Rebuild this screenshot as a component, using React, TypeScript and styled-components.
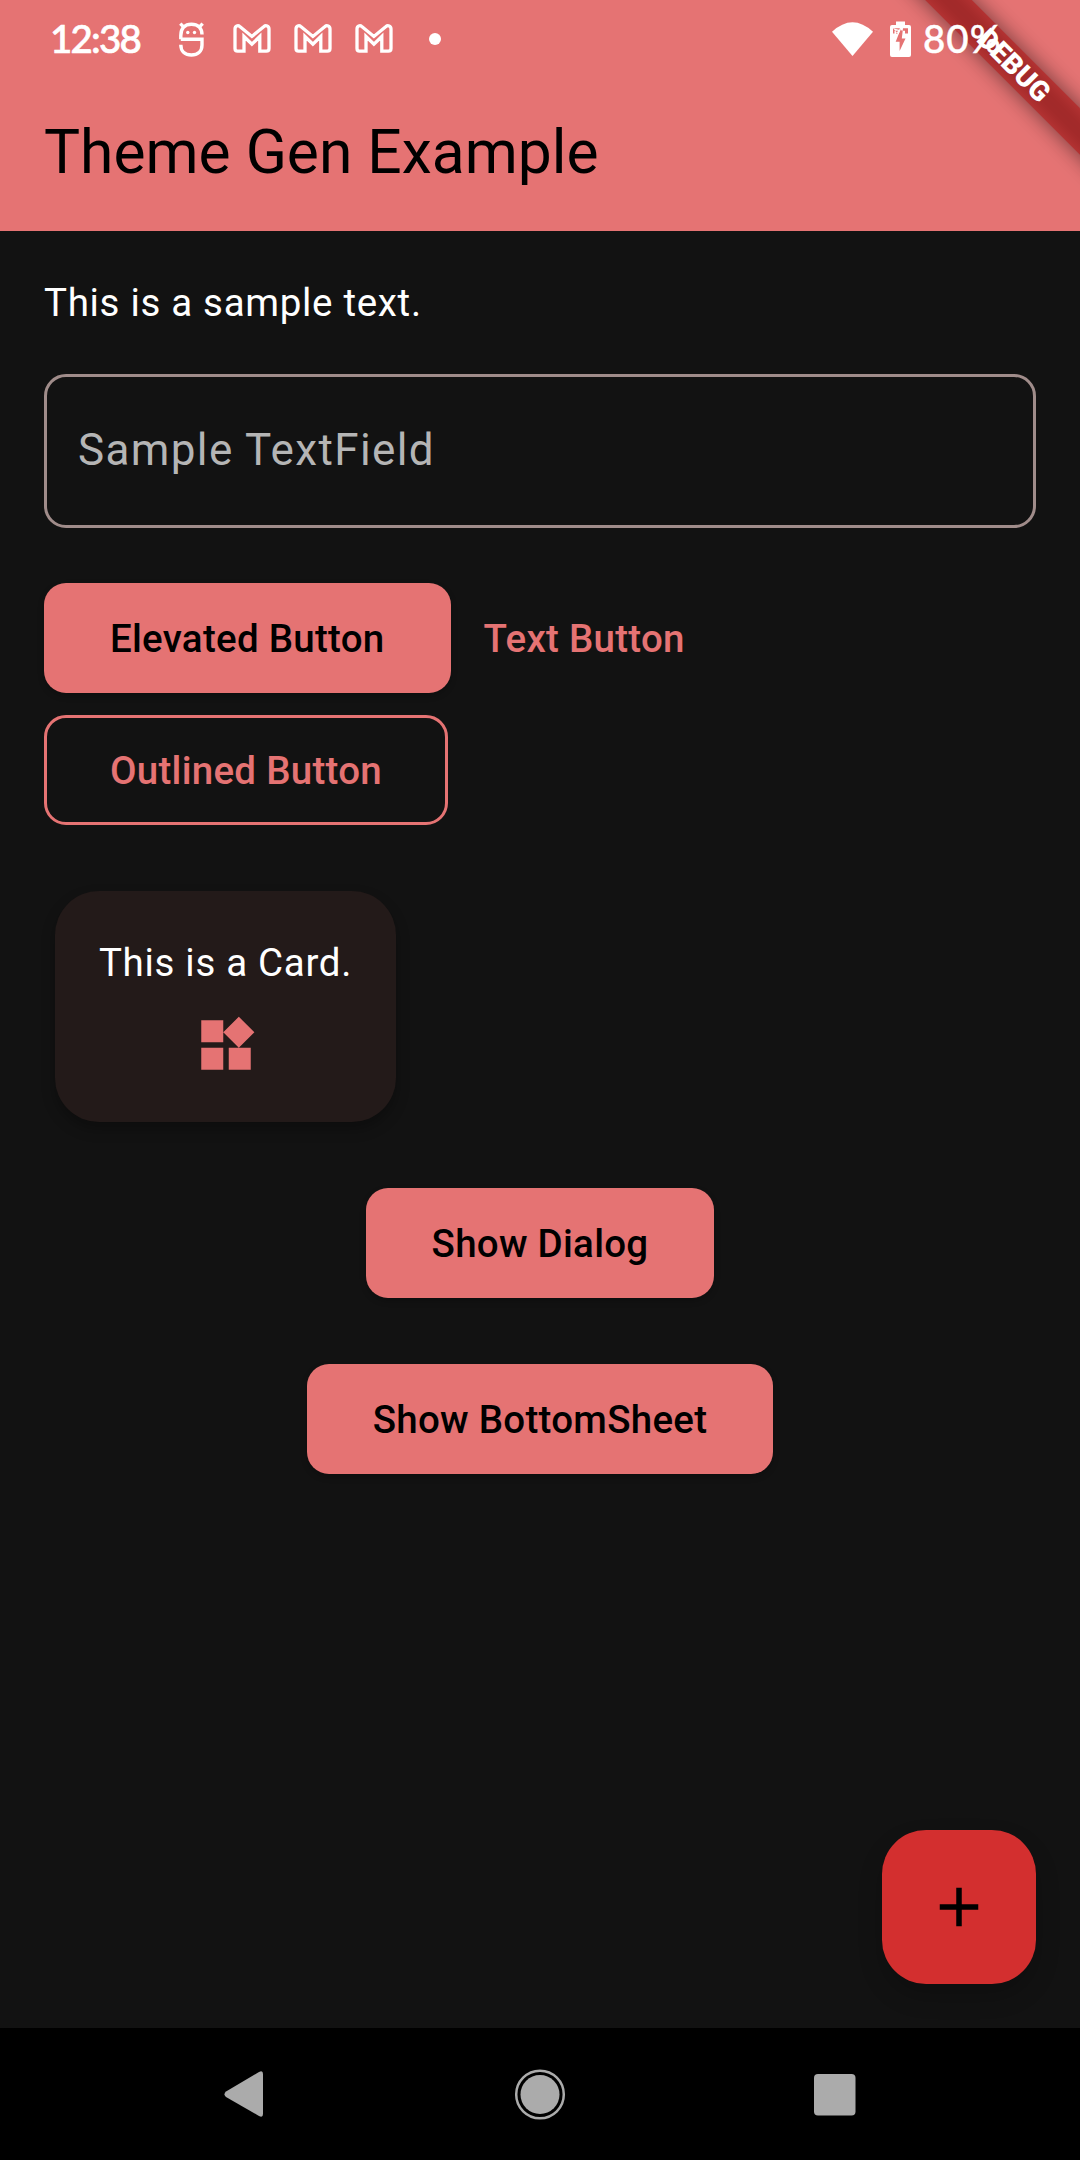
import React from "react";
import styled, { createGlobalStyle, css } from "styled-components";

const coral = "#e57373";
const ink = "#121212";

const GlobalStyle = createGlobalStyle`
  *, *::before, *::after { box-sizing: border-box; }
  body { margin: 0; background: ${ink}; font-family: Roboto, "Noto Sans", sans-serif; }
`;

const Screen = styled.div`
  position: relative;
  display: flex;
  flex-direction: column;
  width: 1080px;
  height: 2160px;
  overflow: hidden;
  background: ${ink};
`;

const Header = styled.header`
  display: flex;
  flex-direction: column;
  height: 231px;
  background: ${coral};
`;

const StatusBar = styled.div`
  position: relative;
  z-index: 2;
  display: flex;
  align-items: center;
  justify-content: space-between;
  height: 77px;
  padding: 0 75px 0 50px;
  color: #fff;
`;

const StatusGroup = styled.div<{ $gap: number }>`
  display: flex;
  align-items: center;
  gap: ${({ $gap }) => $gap}px;
`;

const MailGroup = styled.div`
  display: flex;
  gap: 23px;
  margin-left: 5px;
`;

const StatusText = styled.span`
  font: 500 38.5px/77px Lato, sans-serif;
  white-space: nowrap;
`;

const Clock = styled(StatusText)`
  width: 105px;
  letter-spacing: -1.8px;
  -webkit-text-stroke: 0.7px #fff;
`;

const Percent = styled(StatusText)`
  width: 82px;
  margin-left: -5px;
  letter-spacing: 1px;
  -webkit-text-stroke: 0.4px #fff;
`;

const Dot = styled.span`
  width: 12px;
  height: 12px;
  margin-left: 13px;
  border-radius: 50%;
  background: #fff;
`;

const Glyph = styled.svg`
  display: block;
  flex: none;
  overflow: visible;
`;

const Title = styled.h1`
  display: flex;
  align-items: center;
  height: 154px;
  margin: 0;
  padding: 0 44px 3px;
  color: #000;
  font-size: 60.5px;
  font-weight: 400;
`;

const DebugCorner = styled.div`
  position: absolute;
  z-index: 1;
  top: 0;
  right: 0;
  width: 260px;
  height: 231px;
  overflow: hidden;
`;

const DebugRibbon = styled.div`
  position: absolute;
  top: 49px;
  left: -6px;
  width: 400px;
  height: 33px;
  color: #fff;
  font-size: 28px;
  font-weight: 900;
  line-height: 33px;
  text-align: center;
  transform: rotate(45deg);

  &::before {
    content: "";
    position: absolute;
    z-index: -2;
    inset: 0;
    background: rgba(0, 0, 0, 0.5);
    filter: blur(10.9px);
  }

  &::after {
    content: "";
    position: absolute;
    z-index: -1;
    inset: 0;
    background: rgba(183, 28, 28, 0.627);
  }
`;

const Content = styled.main`
  display: flex;
  flex: 1;
  flex-direction: column;
  align-items: flex-start;
  padding: 44px;
`;

const BodyText = styled.p`
  margin: 0;
  color: #fff;
  font-size: 38.5px;
  line-height: 55px;
  letter-spacing: 0.6875px;
  white-space: nowrap;
`;

const TextField = styled.label`
  display: flex;
  align-items: center;
  width: 100%;
  height: 154px;
  margin-top: 44px;
  padding: 0 31px 3px;
  border: 3px solid #a08c8a;
  border-radius: 22px;
  color: #b5b5b5;
  font-size: 44px;
  letter-spacing: 1.375px;
`;

const ButtonWrap = styled.div`
  display: flex;
  flex-wrap: wrap;
  gap: 22px 0;
  width: 760px;
  margin-top: 55px;
`;

const Button = styled.button<{ $kind?: "filled" | "text" | "outlined" }>`
  height: 110px;
  padding: 0 66px;
  border: 0;
  border-radius: 22px;
  font: 500 38.5px/55px Roboto, sans-serif;
  letter-spacing: 0.275px;
  white-space: nowrap;
  ${({ $kind = "filled" }) =>
    $kind === "filled"
      ? css`
          background: ${coral};
          color: #000;
          box-shadow: 0 3px 6px rgba(0, 0, 0, 0.22);
        `
      : $kind === "outlined"
        ? css`
            padding: 0 63px;
            border: 3px solid ${coral};
            background: transparent;
            color: ${coral};
          `
        : css`
            padding: 0 33px;
            background: transparent;
            color: ${coral};
          `}
`;

const Card = styled.section`
  display: flex;
  flex-direction: column;
  align-items: center;
  gap: 22px;
  width: 341px;
  height: 231px;
  margin: 66px 0 0 11px;
  padding: 44px;
  border-radius: 44px;
  background: #231a19;
  box-shadow: 0 7px 14px rgba(0, 0, 0, 0.28);
`;

const Actions = styled.div`
  display: flex;
  flex-direction: column;
  align-items: center;
  gap: 66px;
  width: 100%;
  margin-top: 66px;
`;

const Fab = styled.button`
  position: absolute;
  right: 44px;
  bottom: 176px;
  display: grid;
  place-items: center;
  width: 154px;
  height: 154px;
  padding: 0;
  border: 0;
  border-radius: 44px;
  background: #d32f2f;
  box-shadow: 0 12px 24px rgba(0, 0, 0, 0.2);
`;

const NavBar = styled.nav`
  display: flex;
  align-items: center;
  justify-content: space-between;
  height: 132px;
  padding: 0 209px;
  background: #000;
`;

const Mascot = () => (
  <Glyph width="27" height="34" viewBox="0 0 27 34" fill="none" stroke="#fff" strokeWidth="3.4">
    <path d="M2.800 17.300V13.500C2.800 6 7 2.200 13.400 2.200S24 6 24 12.600" />
    <path d="M2.800 17.300H24V23C24 29.500 19.500 33 13.400 33S2.800 29.500 2.800 22.700" />
    <path d="M2.300 1.600l4 4M24.700 1.600l-4 4" />
    <circle cx="9.800" cy="10.500" r="1.700" fill="#fff" stroke="none" />
    <circle cx="16.500" cy="10.500" r="1.700" fill="#fff" stroke="none" />
  </Glyph>
);

const Mail = () => (
  <Glyph width="38" height="29" viewBox="0 0 38 29" fill="none" stroke="#fff" strokeWidth="3.3">
    <path d="M2 5V24.500Q2 27.200 4.600 27.200H11V12.500L18.900 20.200 26.800 12.500V27.200H33.300Q36 27.200 36 24.500V5C36 1.800 32.800.8 31 2.400L18.900 12.400 6.800 2.400C5 .8 2 1.800 2 5z" />
  </Glyph>
);

const Wifi = () => (
  <Glyph width="41" height="34" viewBox="0 0 41 34" fill="#fff">
    <path d="M20.500 34 0 9.800Q20.500-9.200 41 9.800z" />
  </Glyph>
);

const Battery = () => (
  <Glyph width="21" height="36" viewBox="0 0 21 36">
    <path d="M6 4V.5h9V4h4q2 0 2 2v28q0 2-2 2H2q-2 0-2-2V6q0-2 2-2z" fill="#fff" />
    <path d="M3 7.300h8L5.700 20.700h3.900V30l5.900-12.500h-3.700L13 7.300h5v5.200h-3V9.700h-2M3 7.300v5.200h1.500V9.700H8l-2 3h2z" fill={coral} />
    <path d="M10.800 6.500 8 13" stroke="#fff" strokeWidth="1.200" />
  </Glyph>
);

export default function App() {
  return (
    <Screen>
      <GlobalStyle />
      <Header>
        <StatusBar>
          <StatusGroup $gap={23}>
            <Clock>12:38</Clock>
            <Mascot />
            <MailGroup>
              <Mail />
              <Mail />
              <Mail />
            </MailGroup>
            <Dot />
          </StatusGroup>
          <StatusGroup $gap={17}>
            <Wifi />
            <Battery />
            <Percent>80%</Percent>
          </StatusGroup>
        </StatusBar>
        <Title>Theme Gen Example</Title>
      </Header>
      <Content>
        <BodyText>This is a sample text.</BodyText>
        <TextField>Sample TextField</TextField>
        <ButtonWrap>
          <Button>Elevated Button</Button>
          <Button $kind="text">Text Button</Button>
          <Button $kind="outlined">Outlined Button</Button>
        </ButtonWrap>
        <Card>
          <BodyText>This is a Card.</BodyText>
          <Glyph width="66" height="66" viewBox="0 0 24 24" fill={coral}>
            <path d="M13 13v8h8v-8h-8zM3 21h8v-8H3v8zM3 3v8h8V3H3zm13.660-1.310L11 7.340 16.660 13l5.660-5.660-5.660-5.650z" />
          </Glyph>
        </Card>
        <Actions>
          <Button>Show Dialog</Button>
          <Button>Show BottomSheet</Button>
        </Actions>
      </Content>
      <NavBar>
        <Glyph width="66" height="66" viewBox="0 0 66 66" fill="#ababab">
          <path d="M17 30.500 50 11q4-2 4 2v40q0 4-4 2L17 36q-3-3 0-5.500z" />
        </Glyph>
        <Glyph width="66" height="66" viewBox="0 0 66 66" fill="#ababab">
          <circle cx="33" cy="33.500" r="19.500" />
          <circle cx="33" cy="33.500" r="23.800" fill="none" stroke="#ababab" strokeWidth="2.500" />
        </Glyph>
        <Glyph width="66" height="66" viewBox="0 0 66 66" fill="#ababab">
          <rect x="9" y="13" width="41.500" height="41.500" rx="4" />
        </Glyph>
      </NavBar>
      <Fab aria-label="Add">
        <Glyph width="66" height="66" viewBox="0 0 24 24">
          <path d="M19 13h-6v6h-2v-6H5v-2h6V5h2v6h6v2z" />
        </Glyph>
      </Fab>
      <DebugCorner>
        <DebugRibbon>DEBUG</DebugRibbon>
      </DebugCorner>
    </Screen>
  );
}
